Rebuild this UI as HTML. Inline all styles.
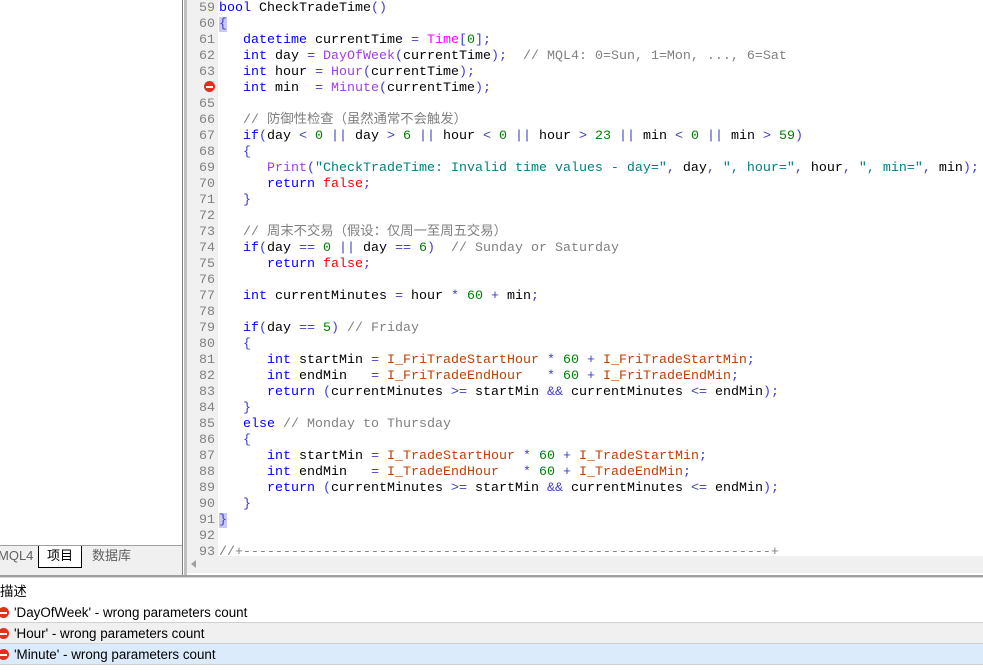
<!DOCTYPE html>
<html><head><meta charset="utf-8"><style>
*{margin:0;padding:0;box-sizing:border-box}
body{width:983px;height:672px;overflow:hidden;background:#fff;position:relative;font-family:"Liberation Sans","Noto Sans CJK SC",sans-serif}
#left{position:absolute;left:0;top:0;width:187px;height:575px;background:#fff;border-right:3px solid #c0c0c0}
#left:after{content:"";position:absolute;right:1px;top:0;width:1px;height:100%;background:#808080}
#gut{position:absolute;left:187px;top:0;width:31px;height:556px;background:#f0f0f0}
#code{position:absolute;left:187px;top:1px;width:796px;height:555px;overflow:hidden;font-family:"Liberation Mono","Noto Sans CJK SC",monospace;font-size:13.33px}
.l{height:16px;line-height:16px;white-space:pre;position:relative}
.n{display:inline-block;width:28px;text-align:right;color:#808080;margin-right:4px}
.k{color:#0000ff}.f{color:#a040e0}.t{color:#ff00ff}.d{color:#008000}.s{color:#008080}.c{color:#808080}.r{color:#ff0000}.i{color:#c04000}.o{color:#4040c0}
.br{background:#c8c8f8}
.err{display:inline-block;width:11px;height:11px;border-radius:50%;background:#e03020;position:relative;vertical-align:-1px}
.err:after{content:"";position:absolute;left:2px;top:4.5px;width:7px;height:2px;background:#fff}
#hs{position:absolute;left:187px;top:556px;width:796px;height:17px;background:#f0f0f0}
#hs:before{content:"";position:absolute;left:4px;top:4px;border-right:5px solid #a0a0a0;border-top:4px solid transparent;border-bottom:4px solid transparent}
#tabs{position:absolute;left:0;top:545px;width:182px;height:30px;background:#f0f0f0;border-top:1px solid #a0a0a0;font-size:13px}
.tab{position:absolute;top:0;height:21px;line-height:20px;color:#606060}
#sep{position:absolute;left:0;top:575px;width:983px;height:3px;background:#a0a0a0;border-bottom:1px solid #d8d8d8}
#bot{position:absolute;left:0;top:578px;width:983px;height:94px;background:#fff;font-size:13.4px}
.row{position:absolute;left:0;width:983px;height:21px;line-height:21px;padding-left:14px;border-bottom:1px solid #d0d0d0;color:#000}
.row .err{position:absolute;left:-2px;top:5px}
</style></head><body>
<div id="left"></div>
<div id="gut"></div>
<div id="code">
<div class="l"><span class="n">59</span><span class="k">bool</span> CheckTradeTime<span class="o">()</span></div>
<div class="l"><span class="n">60</span><span class="br o">{</span></div>
<div class="l"><span class="n">61</span>   <span class="k">datetime</span> currentTime <span class="o">=</span> <span class="t">Time</span><span class="o">[</span><span class="d">0</span><span class="o">];</span></div>
<div class="l"><span class="n">62</span>   <span class="k">int</span> day <span class="o">=</span> <span class="f">DayOfWeek</span><span class="o">(</span>currentTime<span class="o">);</span>  <span class="c">// MQL4: 0=Sun, 1=Mon, ..., 6=Sat</span></div>
<div class="l"><span class="n">63</span>   <span class="k">int</span> hour <span class="o">=</span> <span class="f">Hour</span><span class="o">(</span>currentTime<span class="o">);</span></div>
<div class="l"><span class="n"><span class="err"></span></span>   <span class="k">int</span> min  <span class="o">=</span> <span class="f">Minute</span><span class="o">(</span>currentTime<span class="o">);</span></div>
<div class="l"><span class="n">65</span></div>
<div class="l"><span class="n">66</span>   <span class="c">// 防御性检查（虽然通常不会触发）</span></div>
<div class="l"><span class="n">67</span>   <span class="k">if</span><span class="o">(</span>day <span class="o">&lt;</span> <span class="d">0</span> <span class="o">||</span> day <span class="o">&gt;</span> <span class="d">6</span> <span class="o">||</span> hour <span class="o">&lt;</span> <span class="d">0</span> <span class="o">||</span> hour <span class="o">&gt;</span> <span class="d">23</span> <span class="o">||</span> min <span class="o">&lt;</span> <span class="d">0</span> <span class="o">||</span> min <span class="o">&gt;</span> <span class="d">59</span><span class="o">)</span></div>
<div class="l"><span class="n">68</span>   <span class="o">{</span></div>
<div class="l"><span class="n">69</span>      <span class="f">Print</span><span class="o">(</span><span class="s">"CheckTradeTime: Invalid time values - day="</span><span class="o">,</span> day<span class="o">,</span> <span class="s">", hour="</span><span class="o">,</span> hour<span class="o">,</span> <span class="s">", min="</span><span class="o">,</span> min<span class="o">);</span></div>
<div class="l"><span class="n">70</span>      <span class="k">return</span> <span class="r">false</span><span class="o">;</span></div>
<div class="l"><span class="n">71</span>   <span class="o">}</span></div>
<div class="l"><span class="n">72</span></div>
<div class="l"><span class="n">73</span>   <span class="c">// 周末不交易（假设：仅周一至周五交易）</span></div>
<div class="l"><span class="n">74</span>   <span class="k">if</span><span class="o">(</span>day <span class="o">==</span> <span class="d">0</span> <span class="o">||</span> day <span class="o">==</span> <span class="d">6</span><span class="o">)</span>  <span class="c">// Sunday or Saturday</span></div>
<div class="l"><span class="n">75</span>      <span class="k">return</span> <span class="r">false</span><span class="o">;</span></div>
<div class="l"><span class="n">76</span></div>
<div class="l"><span class="n">77</span>   <span class="k">int</span> currentMinutes <span class="o">=</span> hour <span class="o">*</span> <span class="d">60</span> <span class="o">+</span> min<span class="o">;</span></div>
<div class="l"><span class="n">78</span></div>
<div class="l"><span class="n">79</span>   <span class="k">if</span><span class="o">(</span>day <span class="o">==</span> <span class="d">5</span><span class="o">)</span> <span class="c">// Friday</span></div>
<div class="l"><span class="n">80</span>   <span class="o">{</span></div>
<div class="l"><span class="n">81</span>      <span class="k">int</span> startMin <span class="o">=</span> <span class="i">I_FriTradeStartHour</span> <span class="o">*</span> <span class="d">60</span> <span class="o">+</span> <span class="i">I_FriTradeStartMin</span><span class="o">;</span></div>
<div class="l"><span class="n">82</span>      <span class="k">int</span> endMin   <span class="o">=</span> <span class="i">I_FriTradeEndHour</span>   <span class="o">*</span> <span class="d">60</span> <span class="o">+</span> <span class="i">I_FriTradeEndMin</span><span class="o">;</span></div>
<div class="l"><span class="n">83</span>      <span class="k">return</span> <span class="o">(</span>currentMinutes <span class="o">&gt;=</span> startMin <span class="o">&amp;&amp;</span> currentMinutes <span class="o">&lt;=</span> endMin<span class="o">);</span></div>
<div class="l"><span class="n">84</span>   <span class="o">}</span></div>
<div class="l"><span class="n">85</span>   <span class="k">else</span> <span class="c">// Monday to Thursday</span></div>
<div class="l"><span class="n">86</span>   <span class="o">{</span></div>
<div class="l"><span class="n">87</span>      <span class="k">int</span> startMin <span class="o">=</span> <span class="i">I_TradeStartHour</span> <span class="o">*</span> <span class="d">60</span> <span class="o">+</span> <span class="i">I_TradeStartMin</span><span class="o">;</span></div>
<div class="l"><span class="n">88</span>      <span class="k">int</span> endMin   <span class="o">=</span> <span class="i">I_TradeEndHour</span>   <span class="o">*</span> <span class="d">60</span> <span class="o">+</span> <span class="i">I_TradeEndMin</span><span class="o">;</span></div>
<div class="l"><span class="n">89</span>      <span class="k">return</span> <span class="o">(</span>currentMinutes <span class="o">&gt;=</span> startMin <span class="o">&amp;&amp;</span> currentMinutes <span class="o">&lt;=</span> endMin<span class="o">);</span></div>
<div class="l"><span class="n">90</span>   <span class="o">}</span></div>
<div class="l"><span class="n">91</span><span class="br o">}</span></div>
<div class="l"><span class="n">92</span></div>
<div class="l"><span class="n">93</span><span class="c">//+------------------------------------------------------------------+</span></div>
</div>
<div id="hs"></div>
<div id="tabs">
<div class="tab" style="left:-2px;width:38px">MQL4</div>
<div class="tab" style="left:38px;width:44px;background:#fff;border:1px solid #000;border-top:none;color:#000;text-align:center;height:22px">项目</div>
<div class="tab" style="left:92px">数据库</div>
</div>
<div id="sep"></div>
<div id="bot">
<div style="position:absolute;left:0;top:3px;height:21px;line-height:21px">描述</div>
<div class="row" style="top:24px"><span class="err"></span>'DayOfWeek' - wrong parameters count</div>
<div class="row" style="top:45px;background:#f0f0f0"><span class="err"></span>'Hour' - wrong parameters count</div>
<div class="row" style="top:66px;background:#dcebfc"><span class="err"></span>'Minute' - wrong parameters count</div>
</div>
</body></html>
